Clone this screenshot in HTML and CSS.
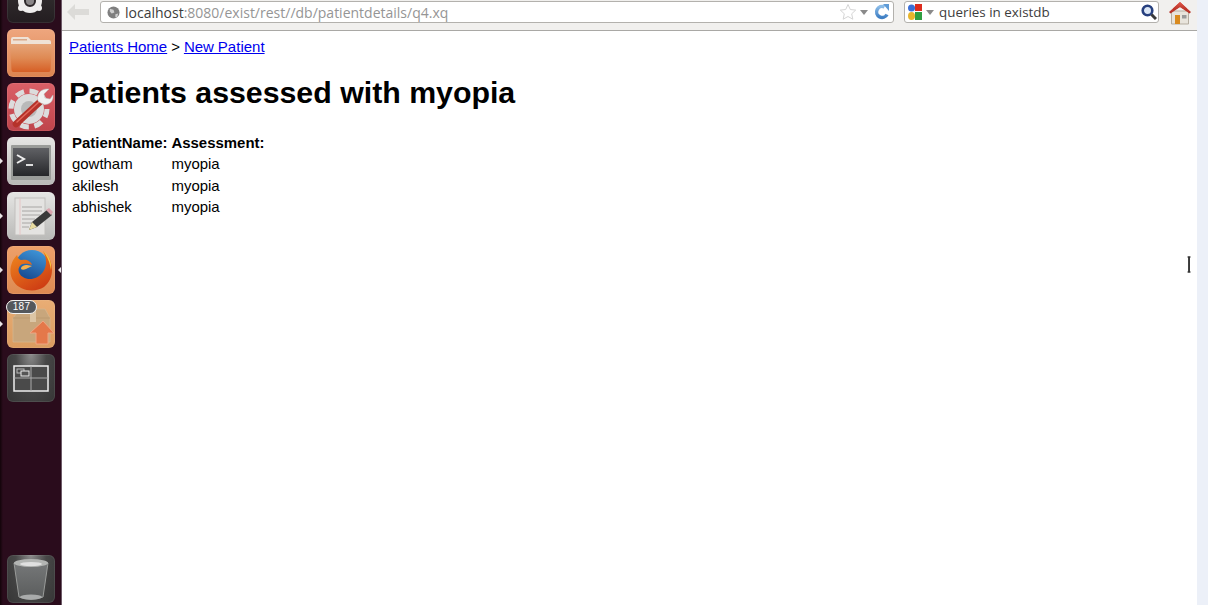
FILE: index.html
```html
<!DOCTYPE html>
<html lang="en">
<head>
<meta charset="utf-8">
<title>Patients assessed with myopia</title>
<link rel="stylesheet" href="styles.css">
</head>
<body>
<svg class="defs" width="0" height="0" aria-hidden="true">
  <defs>
    <linearGradient id="fox" x1="0" y1="0" x2="0.6" y2="1"><stop offset="0" stop-color="#f08a1e"/><stop offset="1" stop-color="#cf3f14"/></linearGradient>
    <linearGradient id="globe" x1="0.7" y1="0" x2="0.3" y2="1"><stop offset="0" stop-color="#3f95d8"/><stop offset="1" stop-color="#123f86"/></linearGradient>
    <linearGradient id="folder" x1="0" y1="0" x2="0" y2="1"><stop offset="0" stop-color="#e6a478"/><stop offset=".5" stop-color="#df8a54"/><stop offset="1" stop-color="#d65f26"/></linearGradient>
    <linearGradient id="screen" x1="0" y1="0" x2="0" y2="1"><stop offset="0" stop-color="#606165"/><stop offset="1" stop-color="#26272a"/></linearGradient>
    <linearGradient id="bin" x1="0" y1="0" x2="0" y2="1"><stop offset="0" stop-color="#77797a"/><stop offset="1" stop-color="#5a5c5c"/></linearGradient>
    <linearGradient id="reload" x1="0" y1="0" x2="0" y2="1"><stop offset="0" stop-color="#8bbce8"/><stop offset="1" stop-color="#3f7fc4"/></linearGradient>
    <linearGradient id="roof" x1="0" y1="0" x2="0" y2="1"><stop offset="0" stop-color="#e0574a"/><stop offset="1" stop-color="#b22d22"/></linearGradient>
  </defs>
</svg>
<div class="desktop">
  <nav class="launcher">
    <div class="launcher-top">
      <div class="tile tile-bfb"><svg viewBox="0 0 48 48" class="icon"><circle cx="23" cy="26" r="9" fill="none" stroke="#efeded" stroke-width="6"/><circle cx="23" cy="26" r="4" fill="#8a8688"/><circle cx="14" cy="33" r="3" fill="#efeded"/><circle cx="32" cy="33" r="3" fill="#efeded"/></svg></div>
      <div class="tile tile-orange"><svg viewBox="0 0 48 48" class="icon"><path d="M4 10q0-2 2-2h15l3 3h18q2 0 2 2v6H4z" fill="#efe2d6"/><path d="M6 10h14v1.500H6z" fill="#d8a888"/><path d="M3 15h42l-1.500 26q0 2-2 2H6.500q-2 0-2-2z" fill="url(#folder)"/></svg></div>
      <div class="tile tile-red"><svg viewBox="0 0 48 48" class="icon"><circle cx="22" cy="26" r="15" fill="#dcdcdc"/><circle cx="22" cy="26" r="18" fill="none" stroke="#dcdcdc" stroke-width="5" stroke-dasharray="8.500 5.640"/><circle cx="22" cy="26" r="8" fill="#b9b9b9"/><path d="M9 41 35 17" stroke="#b5322a" stroke-width="6.500" stroke-linecap="round"/><path d="M10 39 33 18" stroke="#e2685c" stroke-width="1.500" stroke-linecap="round"/><path d="M31 18c-2-7 3-13 11-12l-5 5 1 4 5 1 3-4c1 8-7 13-15 6z" fill="#f0f0f0" stroke="#b9b9b9" stroke-width=".5"/></svg></div>
      <div class="tile tile-silver">
        <svg viewBox="0 0 48 48" class="icon"><rect x="4" y="8" width="40" height="35" rx="1" fill="#9a9c99"/><rect x="6" y="11" width="36" height="28" fill="url(#screen)"/><path d="M10 18l7 4-7 4" fill="none" stroke="#eee" stroke-width="2"/><path d="M19 28h7" stroke="#ddd" stroke-width="2"/></svg>
        <span class="pip pip-left"></span>
      </div>
      <div class="tile tile-silver">
        <svg viewBox="0 0 48 48" class="icon"><rect x="8" y="6" width="30" height="37" fill="#e4e3e1" stroke="#c2c0bd"/><path d="M13 6v37" stroke="#e6c6c6"/><path d="M15 15h20M15 19h20M15 23h18M15 27h13M15 31h10M15 35h7" stroke="#a8a6a4"/><path d="M22 38l3-8 15-12 5 5-15 12z" fill="#3a3a3a"/><path d="M22 38l3-8 5 5z" fill="#e8dca0"/><path d="M39 18l3-2 4 4-2 3z" fill="#d9a3ad"/></svg>
        <span class="pip pip-left"></span>
      </div>
      <div class="tile tile-peach">
        <svg viewBox="0 0 48 48" class="icon"><circle cx="25" cy="21" r="17" fill="url(#globe)"/><path d="M10 9C3 16 1 28 7 36c6 9 21 11 30 5 8-6 10-17 6-27-2-5-5-7-7-9 4 7 4 15 0 21-5 7-14 9-20 5-5-3-6-9-2-12 3-2 8-1 11 0-1-4-6-6-10-5-3 0-4-2-5-5z" fill="url(#fox)"/><path d="M36 5c6 4 9 11 8 19-1-6-3-13-8-19z" fill="#f7c23c"/><path d="M14 23c0-3 3-4 6-4l5 1-6 3c-2 1-4 1-5 0z" fill="#f6b04a"/></svg>
        <span class="pip pip-left"></span><span class="pip pip-right"></span>
      </div>
      <div class="tile tile-faded">
        <svg viewBox="0 0 48 48" class="icon"><path d="M6 18 13 9h25l5 9v24H6z" fill="#c8a67c" stroke="#d4b893" stroke-width=".7"/><path d="M6 18h37" stroke="#bc9a70"/><rect x="23" y="9" width="6" height="13" fill="#dcc5a5"/><path d="M36 21 47 33h-6v11H29V33h-6z" fill="#e4784a" stroke="#efa583"/></svg>
        <span class="pip pip-left"></span>
        <span class="count">187</span>
      </div>
      <div class="tile tile-grad"><svg viewBox="0 0 48 48" class="icon"><rect x="7" y="12" width="34" height="25" fill="#4a4a4a" stroke="#eee" stroke-width="1.500"/><path d="M24 12v25M7 24h34" stroke="#aaa"/><rect x="10" y="15" width="7" height="4" fill="none" stroke="#bbb"/><rect x="14" y="17" width="8" height="5" fill="#555" stroke="#eee"/></svg></div>
    </div>
    <div class="tile tile-grad"><svg viewBox="0 0 48 48" class="icon"><path d="M7 8Q24 3 41 8L36 42Q24 47 12 42z" fill="url(#bin)" stroke="#999b99"/><ellipse cx="24" cy="8" rx="17" ry="4" fill="#b3b5b3"/><ellipse cx="24" cy="9" rx="11" ry="2" fill="#e0e0e0"/><ellipse cx="24" cy="42" rx="11" ry="2.500" fill="#a9abab"/></svg></div>
  </nav>
  <div class="window">
    <header class="toolbar">
      <svg class="back" viewBox="0 0 22 16"><path d="M0 8 8 0v5h14v6H8v5z" fill="#dcdbd8"/></svg>
      <div class="field url">
        <svg class="globe" viewBox="0 0 14 14"><circle cx="7" cy="7" r="6.500" fill="#7f7f7f"/><path d="M3 3l4 1 1 3-3 1-2-2zM9 9l3-1-1 4-2 0z" fill="#cfcfcf"/></svg>
        <span class="url-text"><span class="url-host">localhost</span>:8080/exist/rest//db/patientdetails/q4.xq</span>
        <svg class="star" viewBox="0 0 18 18"><path d="M9 1.500l2.300 5 5.400.6-4 3.700 1.100 5.400L9 13.500l-4.800 2.700 1.100-5.400-4-3.700 5.400-.6z" fill="#fff" stroke="#d5d5d5"/></svg>
        <span class="drop"></span>
        <svg class="reload" viewBox="0 0 16 16"><path d="M13 10.500A5.500 5.500 0 1 1 10.500 3" fill="none" stroke="url(#reload)" stroke-width="3.500"/><path d="M9 0h6v7z" fill="#5f9bd6"/></svg>
      </div>
      <div class="field search">
        <svg class="gicon" viewBox="0 0 16 16"><circle cx="4.500" cy="4" r="3.500" fill="#3a6fd8"/><rect x="8" y="0" width="7" height="7" fill="#dd2c1e"/><path d="M8 8h7v8H8z" fill="#2f9e41"/><ellipse cx="4.500" cy="12" rx="3.500" ry="4" fill="#e8b52c"/></svg>
        <span class="drop"></span>
        <span class="search-text">queries in existdb</span>
        <svg class="lens" viewBox="0 0 16 16"><circle cx="6.500" cy="6.500" r="4.800" fill="#dbe6f5" stroke="#27407f" stroke-width="2.600"/><path d="M10.500 10.500 15 15" stroke="#3a3a3a" stroke-width="3"/></svg>
      </div>
      <svg class="home" viewBox="0 0 24 24"><path d="M3.500 10h17v13h-17z" fill="#e8e4dc" stroke="#b5ada0"/><rect x="7" y="14" width="5" height="9" fill="#d98a1e"/><rect x="14" y="14" width="4.500" height="3.500" fill="#9a9a9a"/><path d="M12 1 23 11l-1.500 1.500L12 6 2.500 12.500 1 11z" fill="url(#roof)"/><path d="M12 1 19 7.500V10l-7-4-7 4V7.500z" fill="url(#roof)"/></svg>
    </header>
    <main class="page">
      <p class="crumbs"><a href="#">Patients Home</a> &gt; <a href="#">New Patient</a></p>
      <h1>Patients assessed with myopia</h1>
      <table>
        <tr><th>PatientName:</th><th>Assessment:</th></tr>
        <tr><td>gowtham</td><td>myopia</td></tr>
        <tr><td>akilesh</td><td>myopia</td></tr>
        <tr><td>abhishek</td><td>myopia</td></tr>
      </table>
      <svg class="cursor" viewBox="0 0 5 18"><path d="M2 1v16" stroke="#333" stroke-width="2" fill="none"/><path d="M.5 1h3M.5 17h3" stroke="#333" stroke-width="1.500"/></svg>
    </main>
  </div>
  <div class="edge"></div>
</div>
</body>
</html>
```
FILE: styles.css
```css
* { box-sizing: border-box; }
html, body { margin: 0; height: 100%; overflow: hidden; }
body { font-family: "Liberation Sans", Arial, sans-serif; background: #fff; color: #000; }
.defs { position: absolute; }
.desktop { display: flex; width: 1208px; height: 605px; overflow: hidden; }

.launcher { width: 62px; flex: none; background: linear-gradient(90deg, #120409 0, #2a0c1c 3px); border-right: 1px solid #6d5a68; display: flex; flex-direction: column; justify-content: space-between; padding: 0 0 2px 7px; height: 605px; }
.launcher-top { display: flex; flex-direction: column; gap: 6.170px; margin-top: -25px; }
.tile { position: relative; width: 48px; height: 48px; border-radius: 6px; flex: none; box-shadow: inset 0 0 0 1px rgba(255, 255, 255, .08); }
.icon { display: block; width: 48px; height: 48px; }
.tile-bfb { background: linear-gradient(#3a3537, #231d20); }
.tile-grad { background: radial-gradient(ellipse at 50% 0, #8b8b8b 0, #474747 45%, #363636 100%); }
.tile-orange { background: linear-gradient(#eea67e, #dd8450); }
.tile-red { background: linear-gradient(#da6067, #bf444b); }
.tile-silver { background: linear-gradient(#e6e6e4, #b9b9b7); }
.tile-peach { background: linear-gradient(#eea06a, #dd8a52); }
.tile-faded { background: linear-gradient(#e9ad75, #da9c60); }
.pip { position: absolute; top: 21px; width: 0; height: 0; border-style: solid; border-color: transparent; border-width: 3px; }
.pip-left { left: -7px; border-left-color: #e9e4e6; }
.pip-right { right: -6px; border-right-color: #e9e4e6; }
.count { position: absolute; left: -1px; top: 0; width: 31px; height: 14px; border-radius: 7px; background: #55585c; border: 1.500px solid #f2f2f2; color: #fff; font: 10px/11px "Liberation Sans", sans-serif; text-align: center; letter-spacing: .3px; }

.window { flex: 1; min-width: 0; display: flex; flex-direction: column; }
.toolbar { height: 31px; flex: none; background: #f1f0ee; border-bottom: 1px solid #a9a8a5; display: flex; align-items: flex-start; padding: 1px 0 0 5px; }
.back { width: 22px; height: 16px; margin: 3px 11px 0 0; flex: none; }
.field { height: 22px; background: #fff; border: 1px solid #b3b1ad; border-radius: 3px; display: flex; align-items: center; font-family: "Open Sans", "Noto Sans", sans-serif; flex: none; }
.url { width: 794px; padding: 0 3px 0 6px; color: #959595; font-size: 14px; }
.globe { width: 13px; height: 13px; margin-right: 5px; flex: none; }
.url-text { flex: 1; white-space: nowrap; }
.url-host { color: #3c3c3c; }
.star { width: 18px; height: 18px; margin-right: 3px; flex: none; }
.drop { width: 0; height: 0; border: 4px solid transparent; border-top: 5px solid #8a8a8a; border-bottom: 0; flex: none; }
.reload { width: 16px; height: 16px; margin-left: 6px; flex: none; }
.search { width: 255px; margin-left: 10px; padding: 0 1px 0 2px; color: #3d3d3d; font-size: 13.400px; }
.gicon { width: 16px; height: 16px; flex: none; margin-right: 3px; }
.search-text { flex: 1; margin-left: 5px; white-space: nowrap; }
.lens { width: 16px; height: 16px; flex: none; }
.home { width: 24px; height: 24px; margin-left: 9px; flex: none; }

.page { position: relative; flex: 1; padding: 7px 7px 0; font-size: 15px; line-height: 17px; }
.crumbs { margin: 0; word-spacing: -.2px; }
h1 { margin: 20px 0 20.500px; font-size: 30.300px; line-height: 35px; font-weight: bold; }
table { border-spacing: 2px; font-size: 14.950px; }
th, td { padding: 1px; text-align: left; white-space: nowrap; line-height: 17.500px; }
th { font-weight: bold; }
.cursor { position: absolute; left: 1125px; top: 225px; width: 5px; height: 17px; }
.edge { width: 11px; flex: none; background: #ecf0f8; }
```
